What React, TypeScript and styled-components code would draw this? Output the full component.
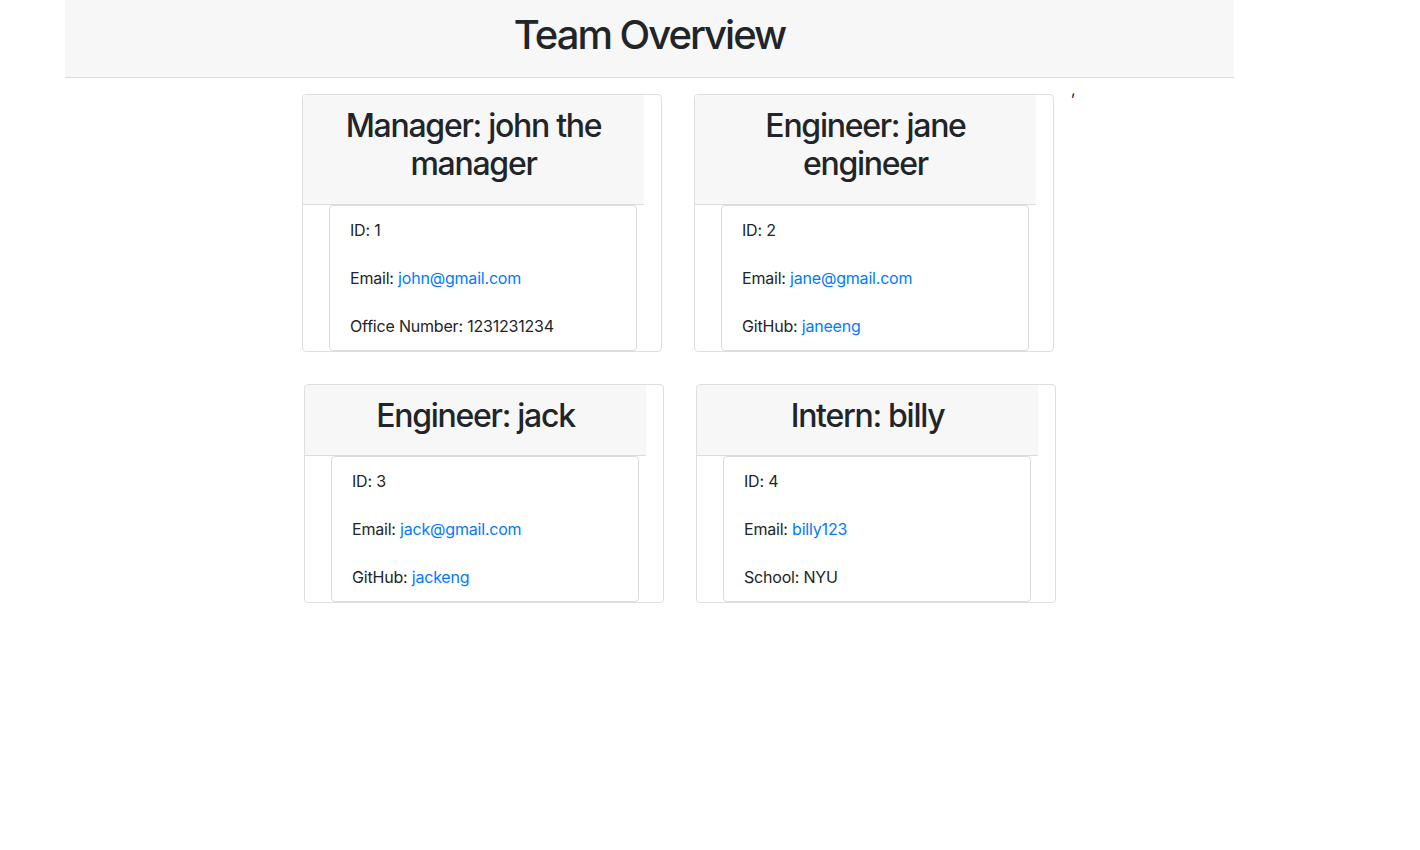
import styled, { createGlobalStyle } from "styled-components";

const GlobalStyle = createGlobalStyle`
  body {
    margin: 0;
    background: #fff;
    color: #212529;
    font-family: Inter, "Noto Sans", "Liberation Sans", sans-serif;
    font-size: 16px;
    line-height: 1.5;
    letter-spacing: -0.2px;
  }
`;

const Page = styled.div`
  width: 1169px;
  margin-left: 65px;
`;

const TopBar = styled.header`
  height: 77px;
  background-color: #f7f7f7;
  border-bottom: 1px solid #dcdcdc;
  display: flex;
  justify-content: center;
  align-items: center;
`;

const Title = styled.h1`
  margin: 0 0 8px;
  font-size: 40px;
  font-weight: 500;
  line-height: 1.2;
  letter-spacing: -0.05em;
`;

const Row = styled.div<{ shift: number; top: number }>`
  display: flex;
  align-items: flex-start;
  gap: 32px;
  margin-top: ${props => props.top}px;
  padding-left: ${props => 237 + props.shift}px;
`;

const Stray = styled.span`
  margin-left: -15px;
  margin-top: -1px;
`;

const Card = styled.div`
  width: 358px;
  margin-top: 16px;
  border: 1px solid #dfdfdf;
  border-radius: 4px;
  background: #fff;
`;

const CardHeader = styled.div`
  width: 301px;
  padding: 12px 20px;
  background-color: #f7f7f7;
  border-bottom: 1px solid #dcdcdc;
  border-top-left-radius: 3px;
  text-align: center;
`;

const Name = styled.h2`
  margin: 0 0 8px;
  font-size: 32px;
  font-weight: 500;
  line-height: 1.2;
  letter-spacing: -0.04em;
`;

const List = styled.ul`
  width: 306px;
  margin: 0 0 0 26px;
  padding: 0;
  list-style: none;
  border: 1px solid #dcdcdc;
  border-radius: 4px;
`;

const Item = styled.li`
  padding: 12px 20px;
  line-height: 24px;
`;

const Link = styled.a`
  color: #007bff;
  text-decoration: none;
`;

type Member = {
  role: string;
  name: string;
  id: number;
  email: string;
  extraLabel: string;
  extra: string;
  extraLink: boolean;
};

const team: Member[] = [
  { role: "Manager", name: "john the manager", id: 1, email: "john@gmail.com", extraLabel: "Office Number", extra: "1231231234", extraLink: false },
  { role: "Engineer", name: "jane engineer", id: 2, email: "jane@gmail.com", extraLabel: "GitHub", extra: "janeeng", extraLink: true },
  { role: "Engineer", name: "jack", id: 3, email: "jack@gmail.com", extraLabel: "GitHub", extra: "jackeng", extraLink: true },
  { role: "Intern", name: "billy", id: 4, email: "billy123", extraLabel: "School", extra: "NYU", extraLink: false },
];

const MemberCard = ({ m }: { m: Member }) => (
  <Card>
    <CardHeader>
      <Name>{m.role}: {m.name}</Name>
    </CardHeader>
    <List>
      <Item>ID: {m.id}</Item>
      <Item>
        Email: <Link href={`mailto:${m.email}`}>{m.email}</Link>
      </Item>
      <Item>
        {m.extraLabel}:{" "}
        {m.extraLink ? <Link href={`https://github.com/${m.extra}`}>{m.extra}</Link> : m.extra}
      </Item>
    </List>
  </Card>
);

export default function App() {
  return (
    <>
      <GlobalStyle />
      <Page>
        <TopBar>
          <Title>Team Overview</Title>
        </TopBar>
        <Row shift={0} top={0}>
          <MemberCard m={team[0]} />
          <MemberCard m={team[1]} />
          <Stray>,</Stray>
        </Row>
        <Row shift={2} top={16}>
          <MemberCard m={team[2]} />
          <MemberCard m={team[3]} />
        </Row>
      </Page>
    </>
  );
}
